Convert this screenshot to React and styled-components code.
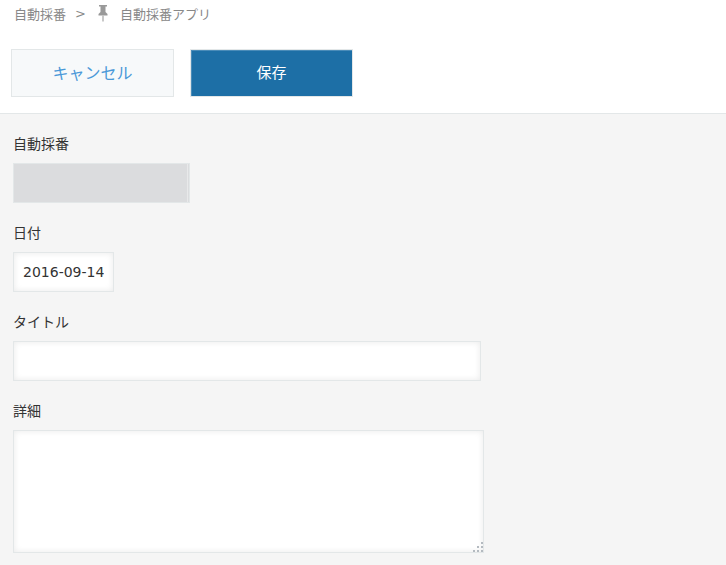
import React from 'react'
import styled, { createGlobalStyle } from 'styled-components'

const fontStack = `"DejaVu Sans", "Noto Sans CJK JP", sans-serif`

const GlobalStyle = createGlobalStyle`
  html, body {
    margin: 0;
    height: 100%;
    background: #f5f5f5;
    font-family: ${fontStack};
    overflow: hidden;
  }
`

const Header = styled.header`
  background: #fff;
  height: 113px;
  border-bottom: 1px solid #e3e7e8;
`

const Breadcrumb = styled.nav`
  display: flex;
  align-items: center;
  height: 26px;
  padding-left: 14px;
  font-size: 13px;
  color: #888;
`

const Separator = styled.span`
  margin: 0 11px 0 9px;
`

const PinIcon = styled.svg`
  width: 12px;
  height: 18px;
  margin-right: 11px;
`

const Toolbar = styled.div`
  display: flex;
  gap: 16px;
  margin-top: 23px;
  padding-left: 11px;
`

const Button = styled.button`
  width: 163px;
  height: 48px;
  padding: 0 0 3px;
  box-sizing: border-box;
  font-family: ${fontStack};
  font-size: ${props => props.$primary ? '15px' : '16px'};
  color: ${props => props.$primary ? '#fff' : '#4a98d8'};
  background: ${props => props.$primary ? '#1d6fa6' : '#f7f9fa'};
  border: 1px solid #e3e7e8;
  box-shadow: ${props => props.$primary ? 'inset 1px 1px 0 #4a8cb9' : 'none'};
`

const Form = styled.form`
  display: flex;
  flex-direction: column;
  gap: 20px;
  padding: 20px 13px 0;
`

const Field = styled.div`
  display: flex;
  flex-direction: column;
  align-items: flex-start;
`

const Label = styled.label`
  height: 20px;
  line-height: 20px;
  font-size: 14px;
  color: #333;
  margin-bottom: 9px;
`

const ReadOnlyBox = styled.div`
  width: 177px;
  height: 40px;
  box-sizing: border-box;
  border: 1px solid #e3e7e8;
  background: #dbdcde;
`

const ReadOnlyInner = styled.div`
  width: 173px;
  height: 100%;
  border-right: 1px solid #e8e9ea;
`

const TextInput = styled.input`
  width: ${props => props.$width}px;
  height: 40px;
  box-sizing: border-box;
  padding: 0 9px;
  font-family: ${fontStack};
  font-size: 14px;
  color: #333;
  background: #fff;
  border: 1px solid #e3e7e8;
  border-radius: 0;
  outline: none;
  box-shadow: inset 0 0 6px rgba(0, 0, 0, 0.09);
`

const TextAreaWrap = styled.div`
  position: relative;
  width: 471px;
  height: 123px;
`

const TextArea = styled.textarea`
  display: block;
  width: 100%;
  height: 100%;
  box-sizing: border-box;
  margin: 0;
  background: #fff;
  border: 1px solid #e3e7e8;
  border-radius: 0;
  outline: none;
  resize: none;
  box-shadow: inset 0 0 6px rgba(0, 0, 0, 0.09);
`

const Grip = styled.svg`
  position: absolute;
  right: 0;
  bottom: 0;
  width: 11px;
  height: 11px;
`

const App = () => (
  <>
    <GlobalStyle />
    <Header>
      <Breadcrumb>
        <span>自動採番</span>
        <Separator>&gt;</Separator>
        <PinIcon viewBox="0 0 12 18">
          <path d="M2 1h8v1.5H8.5V8L10.5 10v1.5h-9V10L3.5 8V2.5H2z" fill="#999" />
          <rect x="5.2" y="11.5" width="1.6" height="6" fill="#bbb" />
        </PinIcon>
        <span>自動採番アプリ</span>
      </Breadcrumb>
      <Toolbar>
        <Button type="button">キャンセル</Button>
        <Button type="button" $primary>保存</Button>
      </Toolbar>
    </Header>
    <Form>
      <Field>
        <Label>自動採番</Label>
        <ReadOnlyBox><ReadOnlyInner /></ReadOnlyBox>
      </Field>
      <Field>
        <Label>日付</Label>
        <TextInput $width={101} defaultValue="2016-09-14" />
      </Field>
      <Field>
        <Label>タイトル</Label>
        <TextInput $width={468} />
      </Field>
      <Field>
        <Label>詳細</Label>
        <TextAreaWrap>
          <TextArea />
          <Grip viewBox="0 0 11 11">
            <g fill="#b4bac0">
              <rect x="8" y="0" width="2" height="2" />
              <rect x="4" y="4" width="2" height="2" />
              <rect x="8" y="4" width="2" height="2" />
              <rect x="0" y="8" width="2" height="2" />
              <rect x="4" y="8" width="2" height="2" />
              <rect x="8" y="8" width="2" height="2" />
            </g>
          </Grip>
        </TextAreaWrap>
      </Field>
    </Form>
  </>
)

export default App
